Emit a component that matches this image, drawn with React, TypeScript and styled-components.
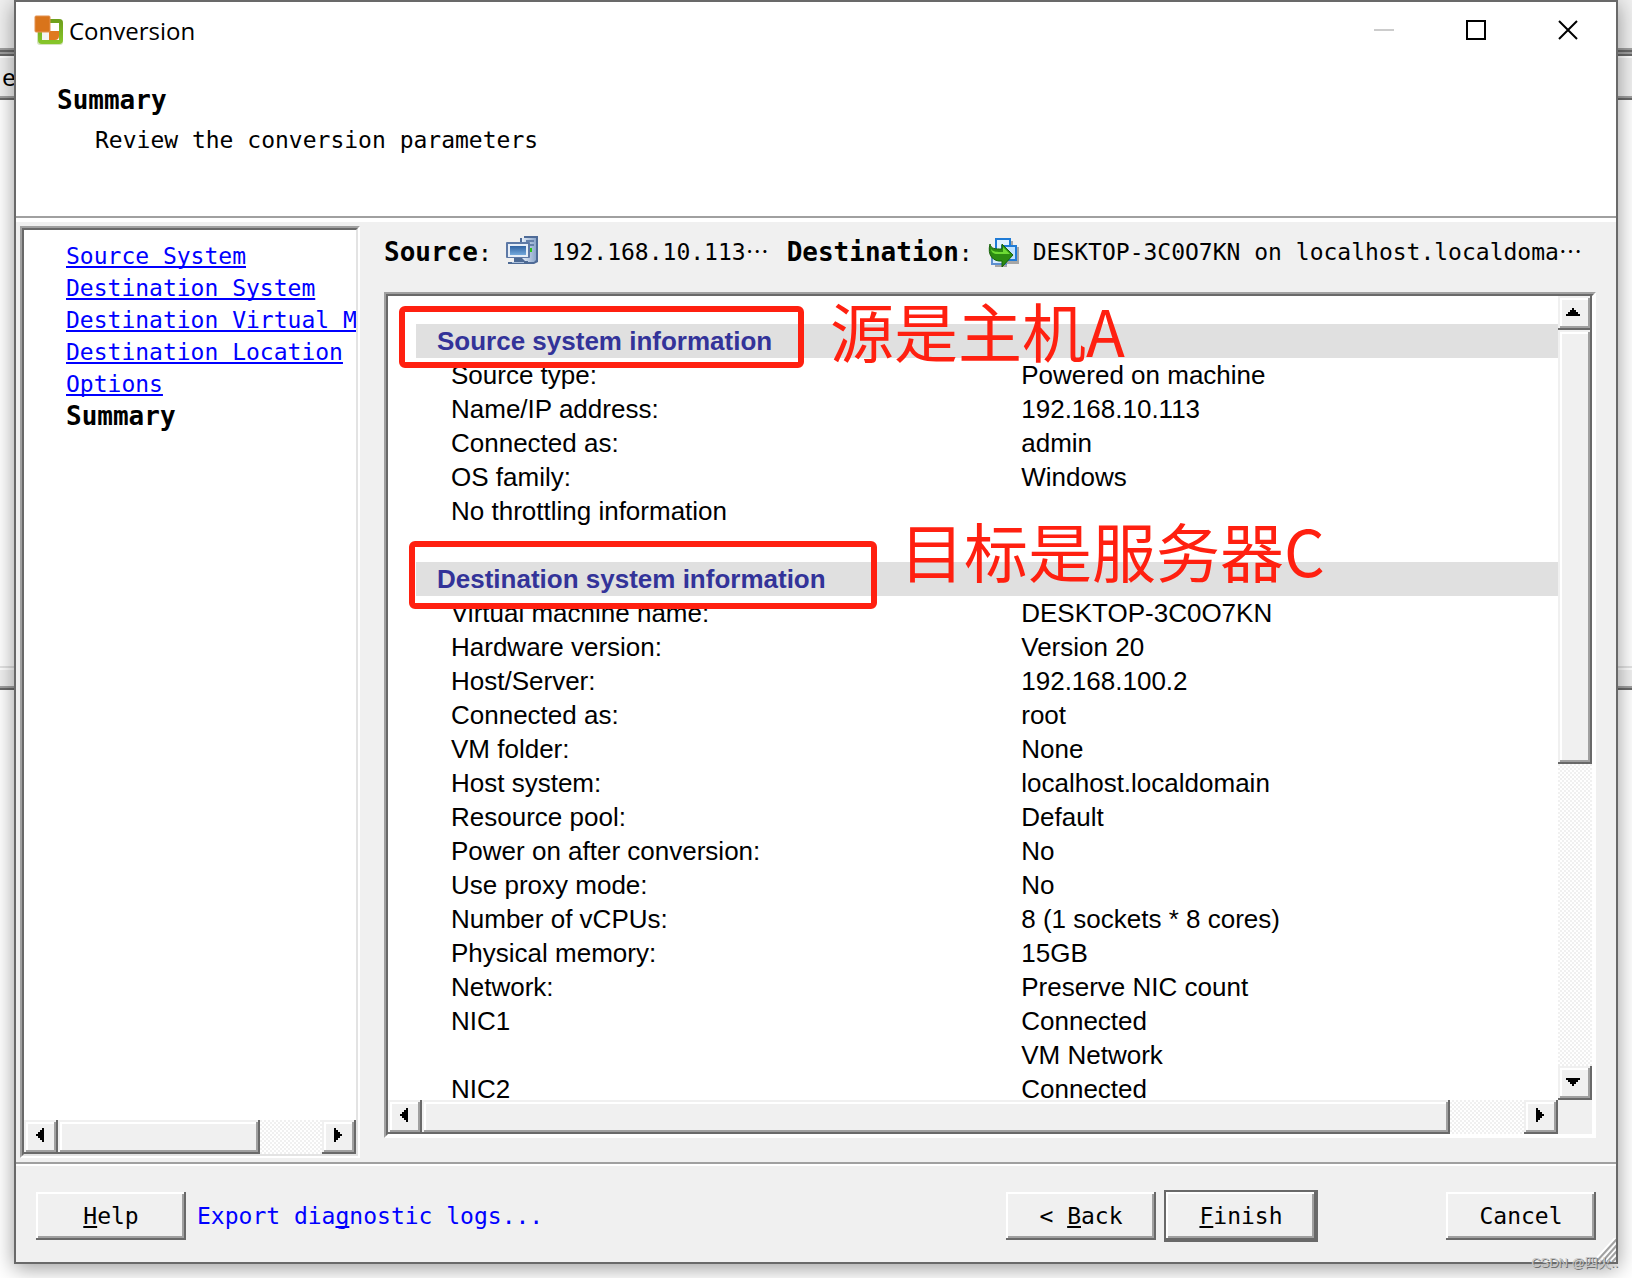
import React from "react";
import styled, { createGlobalStyle, css } from "styled-components";

const face = "#f0f0f0";
const shade = "#a0a0a0";
const dark = "#696969";
const light = "#e3e3e3";
const red = "#ff2010";
const mono = '"DejaVu Sans Mono", "Liberation Mono", monospace';

const Global = createGlobalStyle`
  * { box-sizing: border-box; }
  body { margin: 0; background: #fff; color: #000; font-family: ${mono}; font-size: 23px; line-height: 32px; }
  button { font: inherit; color: inherit; padding: 0; margin: 0; }
`;

const Desktop = styled.div`
  position: relative;
  height: 100vh;
  padding: 0 14px 14px;
  overflow: hidden;
`;

const Backdrop = styled.div`
  position: absolute;
  inset: 0;
  display: flex;
  flex-direction: column;
  background: #fff;
`;

const BackBar = styled.div`
  height: 56px;
  background: ${face};
  border-bottom: 2px solid ${dark};
  display: flex;
  flex-direction: column;
  justify-content: flex-end;
  &::after {
    content: "";
    height: 6px;
    background: linear-gradient(${shade} 2px, ${dark} 2px 4px, ${shade} 4px);
  }
`;

const BackHeader = styled.div`
  height: 44px;
  padding: 4px 0 0 2px;
  background: ${face};
  border-top: 2px solid #fff;
  border-bottom: 2px solid ${dark};
  box-shadow: inset 0 -2px 0 ${shade};
`;

const BackList = styled.div`
  height: 566px;
  background: #fff;
`;

const BackSplitter = styled.div`
  height: 24px;
  background: ${face};
  border-top: 2px solid ${light};
  border-bottom: 2px solid ${dark};
  box-shadow: inset 0 2px 0 #fff, inset 0 -2px 0 ${shade};
`;

const Dialog = styled.main`
  position: relative;
  height: 100%;
  display: flex;
  flex-direction: column;
  background: ${face};
  border: 2px solid ${dark};
  box-shadow: 0 4px 20px rgba(0, 0, 0, 0.4);
`;

const TitleBar = styled.header`
  display: flex;
  align-items: center;
  height: 56px;
  padding: 0 2px 0 18px;
  background: #fff;
  flex: none;
`;

const Title = styled.h1`
  flex: 1;
  margin: 2px 0 0 4px;
  font: 400 24px/32px "Open Sans", "Noto Sans", sans-serif;
`;

const CaptionButton = styled.button`
  width: 92px;
  height: 56px;
  border: 0;
  background: none;
  color: ${(p) => (p.disabled ? "#ccc" : "#000")};
  display: grid;
  place-items: center;
`;

const Banner = styled.section`
  flex: none;
  display: flex;
  flex-direction: column;
  gap: 8px;
  height: 164px;
  padding: 26px 41px;
  background: #fff;
  border-bottom: 4px solid #fff;
  box-shadow: inset 0 -2px 0 ${shade};
`;

const Strong = styled.strong`
  font-size: 26px;
  font-weight: 700;
  white-space: nowrap;
`;

const BannerTitle = styled.h2`
  margin: 0;
  font-size: 26px;
  line-height: 32px;
`;

const BannerText = styled.p`
  margin: 0;
  padding-left: 38px;
`;

const Body = styled.div`
  flex: 1;
  min-height: 0;
  display: grid;
  grid-template-columns: 340px minmax(0, 1fr);
  gap: 24px;
  padding: 4px 20px 4px 4px;
`;

const sunken = css`
  border: 2px solid;
  border-color: ${shade} #fff #fff ${shade};
`;

const Sidebar = styled.nav`
  ${sunken}
  min-height: 0;
  display: flex;
`;

const SidebarInner = styled.div`
  flex: 1;
  min-width: 0;
  display: flex;
  flex-direction: column;
  background: #fff;
  border: 2px solid;
  border-color: ${dark} ${light} ${light} ${dark};
`;

const StepList = styled.ol`
  flex: 1;
  margin: 0;
  padding: 10px 0 0 42px;
  list-style: none;
  overflow: hidden;
  white-space: nowrap;
`;

const StepLink = styled.a`
  color: #00f;
  text-decoration: underline;
  text-decoration-thickness: 2px;
  text-underline-offset: 2px;
  text-decoration-skip-ink: none;
`;

const Content = styled.section`
  min-height: 0;
  display: flex;
  flex-direction: column;
  padding-bottom: 20px;
`;

const Route = styled.div`
  flex: none;
  display: flex;
  gap: 18px;
  height: 66px;
  padding-top: 10px;
`;

const RouteEnd = styled.div`
  display: flex;
  gap: 14px;
  height: 32px;
  white-space: nowrap;
`;

const Ellipsis = styled.span`
  font-family: "Noto Sans CJK SC", sans-serif;
  line-height: 1;
`;

const Pane = styled.div`
  ${sunken}
  flex: 1;
  min-height: 0;
  display: flex;
`;

const PaneGrid = styled.div`
  flex: 1;
  min-width: 0;
  display: grid;
  grid-template: minmax(0, 1fr) 34px / minmax(0, 1fr) 34px;
  border: 2px solid;
  border-color: ${dark} #fff #fff ${dark};
`;

const Viewport = styled.div`
  position: relative;
  overflow: hidden;
  padding: 28px 0 0 28px;
  background: #fff;
`;

const InfoTable = styled.table`
  width: 100%;
  table-layout: fixed;
  border-collapse: collapse;
  font: 26px/34px "Liberation Sans", Arial, sans-serif;
`;

const LabelCol = styled.col`
  width: 53%;
`;

const GroupHead = styled.th`
  height: 34px;
  padding: 0 0 0 21px;
  text-align: left;
  color: #333399;
  background: #e0e0e0;
`;

const RowHead = styled.th`
  height: 34px;
  padding: 0 0 0 35px;
  text-align: left;
  font-weight: 400;
`;

const Cell = styled.td`
  height: 34px;
  padding: 0;
`;

const MarkBox = styled.div<{ $x: number; $y: number; $w: number; $h: number }>`
  position: absolute;
  left: ${(p) => p.$x}px;
  top: ${(p) => p.$y}px;
  width: ${(p) => p.$w}px;
  height: ${(p) => p.$h}px;
  border: 6px solid ${red};
  border-radius: 6px;
`;

const MarkText = styled.div<{ $x: number; $y: number }>`
  position: absolute;
  left: ${(p) => p.$x}px;
  top: ${(p) => p.$y}px;
  color: ${red};
  font: 64px/64px "Noto Sans CJK SC", sans-serif;
  white-space: nowrap;
`;

const Bar = styled.div<{ $vertical?: boolean }>`
  display: flex;
  flex-direction: ${(p) => (p.$vertical ? "column" : "row")};
  flex: none;
  min-height: 34px;
  min-width: 34px;
  background: repeating-conic-gradient(#fff 0 25%, ${face} 0 50%) 0 0 / 4px 4px;
`;

const raised = css`
  background: ${face};
  box-shadow: inset -2px -2px 0 ${dark}, inset 2px 2px 0 ${face}, inset -4px -4px 0 ${shade}, inset 4px 4px 0 #fff;
`;

const ArrowButton = styled.button`
  ${raised}
  width: 34px;
  height: 34px;
  border: 0;
  flex: none;
  display: block;
`;

const Track = styled.div<{ $vertical?: boolean }>`
  flex: 1;
  min-width: 0;
  min-height: 0;
  display: flex;
  flex-direction: ${(p) => (p.$vertical ? "column" : "row")};
`;

const Thumb = styled.div<{ $size: string }>`
  ${raised}
  flex: 0 0 ${(p) => p.$size};
`;

const Footer = styled.footer`
  flex: none;
  display: flex;
  align-items: center;
  padding: 26px 20px 20px;
  border-top: 2px solid ${shade};
  box-shadow: inset 0 2px 0 #fff;
  height: 100px;
`;

const PushButton = styled.button<{ $default?: boolean }>`
  width: ${(p) => (p.$default ? 154 : 150)}px;
  height: ${(p) => (p.$default ? 52 : 48)}px;
  background: ${face};
  border: ${(p) => (p.$default ? 2 : 0)}px solid ${dark};
  box-shadow: inset -2px -2px 0 ${dark}, inset 2px 2px 0 #fff, inset -4px -4px 0 ${shade};
  white-space: pre;
`;

const ExportLink = styled.a`
  flex: 1;
  margin-left: 11px;
  color: #00f;
  text-decoration: none;
`;

const NavButtons = styled.div`
  display: flex;
  align-items: center;
  gap: 8px;
  margin-right: 128px;
`;

const Key = styled.span`
  text-decoration: underline;
  text-decoration-thickness: 2px;
  text-underline-offset: 2px;
  text-decoration-skip-ink: none;
`;

const Grip = styled.svg`
  position: absolute;
  right: 0;
  bottom: 0;
`;

const Watermark = styled.div`
  position: absolute;
  right: 14px;
  bottom: 5px;
  color: #c8c8c8;
  font: 13px/20px "Liberation Sans", "Noto Sans CJK SC", sans-serif;
  text-shadow: 1px 1px 0 #707070;
`;

const AppIcon = () => (
  <svg width="31" height="30" viewBox="0 0 31 30" aria-hidden="true">
    <defs>
      <linearGradient id="leaf" x1="0" y1="0" x2="0" y2="1">
        <stop offset="0" stopColor="#6fa01c" />
        <stop offset="1" stopColor="#86c52a" />
      </linearGradient>
    </defs>
    <rect x="3" y="4" width="26" height="26" rx="3" fill="#d5e3bf" />
    <rect x="6" y="6" width="21" height="21" rx="2" fill="#fff" stroke="url(#leaf)" strokeWidth="4" />
    <path d="M15 16h10v5q0 4-4 4h-6z" fill="#df7a20" />
    <path d="M8 17h7v8H8z" fill="#f3f3f3" />
    <rect x="1" y="1" width="15" height="16" rx="1" fill="#d9741b" stroke="#e39150" strokeWidth="1" />
  </svg>
);

const ComputerIcon = () => (
  <svg width="32" height="32" viewBox="0 0 32 32" aria-hidden="true">
    <defs>
      <linearGradient id="screen" x1="0" y1="0" x2="0" y2="1">
        <stop offset="0" stopColor="#2f62a2" />
        <stop offset="1" stopColor="#74a9dc" />
      </linearGradient>
      <linearGradient id="tower" x1="0" y1="0" x2="1" y2="0">
        <stop offset="0" stopColor="#e4edf8" />
        <stop offset="1" stopColor="#8ba6cb" />
      </linearGradient>
    </defs>
    <path d="M18 0h14v26l-4 2h-8l-6-4V2h4z" fill="#4f6b97" />
    <path d="M16 2h14v22l-2 2h-8l-4-4z" fill="url(#tower)" />
    <path d="M20 4h8v2h-8zM20 8h8v2h-8z" fill="#6480aa" />
    <path d="M24 12h2v4h-2z" fill="#2fc41c" />
    <rect x="0" y="6" width="24" height="16" rx="1" fill="#5d79a6" />
    <rect x="2" y="8" width="20" height="13" fill="#e6eef8" />
    <rect x="4" y="10" width="16" height="9" fill="url(#screen)" />
    <path d="M8 22h8v3h6v3H2v-2h6z" fill="#4d6a94" />
    <path d="M6 26h12v1H6z" fill="#a9bfdc" />
  </svg>
);

const ConvertIcon = () => (
  <svg width="32" height="32" viewBox="0 0 32 32" aria-hidden="true">
    <path d="M10 5h16v6h6v17H20v3H8v-4z" fill="#a6a6a6" />
    <rect x="9" y="3" width="14" height="14" fill="#dff1ff" stroke="#1f7bd6" strokeWidth="2" />
    <rect x="15" y="10" width="14" height="14" fill="#bfe2ff" stroke="#1f7bd6" strokeWidth="2" />
    <rect x="5" y="16" width="14" height="12" fill="#d8ecff" stroke="#5d8fd0" strokeWidth="2" />
    <path d="M3 8c1 5 5 5 12 5V8l11 11-11 12v-6C6 26 0 19 3 8z" fill="#2c8c12" stroke="#17620a" />
    <path d="M4 13c2 3 6 3 12 3v-5l7 7H10c-3 0-6-2-6-5z" fill="#6ddb34" />
  </svg>
);

const arrowPaths = {
  up: "M14 12h2v2h2v2h2v2h2v2H8v-2h2v-2h2v-2h2z",
  down: "M8 12h14v2h-2v2h-2v2h-2v2h-2v-2h-2v-2h-2v-2H8z",
  left: "M20 8v14h-2v-2h-2v-2h-2v-2h-2v-2h2v-2h2v-2h2V8z",
  right: "M12 8v14h2v-2h2v-2h2v-2h2v-2h-2v-2h-2v-2h-2V8z",
};

const Arrow = ({ dir }: { dir: keyof typeof arrowPaths }) => (
  <ArrowButton type="button" aria-label={`Scroll ${dir}`}>
    <svg width="34" height="34" viewBox="0 0 34 34" shapeRendering="crispEdges" aria-hidden="true">
      <path d={arrowPaths[dir]} />
    </svg>
  </ArrowButton>
);

const ScrollBar = ({ vertical, size }: { vertical?: boolean; size: string }) => (
  <Bar $vertical={vertical}>
    <Arrow dir={vertical ? "up" : "left"} />
    <Track $vertical={vertical}>
      <Thumb $size={size} />
    </Track>
    <Arrow dir={vertical ? "down" : "right"} />
  </Bar>
);

const steps = ["Source System", "Destination System", "Destination Virtual Machine", "Destination Location", "Options"];

const groups = [
  {
    title: "Source system information",
    rows: [
      ["Source type:", "Powered on machine"],
      ["Name/IP address:", "192.168.10.113"],
      ["Connected as:", "admin"],
      ["OS family:", "Windows"],
      ["No throttling information", ""],
      ["", ""],
    ],
  },
  {
    title: "Destination system information",
    rows: [
      ["Virtual machine name:", "DESKTOP-3C0O7KN"],
      ["Hardware version:", "Version 20"],
      ["Host/Server:", "192.168.100.2"],
      ["Connected as:", "root"],
      ["VM folder:", "None"],
      ["Host system:", "localhost.localdomain"],
      ["Resource pool:", "Default"],
      ["Power on after conversion:", "No"],
      ["Use proxy mode:", "No"],
      ["Number of vCPUs:", "8 (1 sockets * 8 cores)"],
      ["Physical memory:", "15GB"],
      ["Network:", "Preserve NIC count"],
      ["NIC1", "Connected"],
      ["", "VM Network"],
      ["NIC2", "Connected"],
    ],
  },
];

export default function App() {
  return (
    <Desktop>
      <Global />
      <Backdrop>
        <BackBar />
        <BackHeader>e</BackHeader>
        <BackList />
        <BackSplitter />
      </Backdrop>
      <Dialog>
        <TitleBar>
          <AppIcon />
          <Title>Conversion</Title>
          <CaptionButton type="button" disabled aria-label="Minimize">
            <svg width="20" height="20" viewBox="0 0 20 20">
              <path d="M0 10h20" stroke="currentColor" strokeWidth="2" />
            </svg>
          </CaptionButton>
          <CaptionButton type="button" aria-label="Maximize">
            <svg width="20" height="20" viewBox="0 0 20 20">
              <rect x="1" y="1" width="18" height="18" fill="none" stroke="currentColor" strokeWidth="2" />
            </svg>
          </CaptionButton>
          <CaptionButton type="button" aria-label="Close">
            <svg width="20" height="20" viewBox="0 0 20 20">
              <path d="M1 1l18 18M19 1L1 19" stroke="currentColor" strokeWidth="2" />
            </svg>
          </CaptionButton>
        </TitleBar>
        <Banner>
          <BannerTitle>Summary</BannerTitle>
          <BannerText>Review the conversion parameters</BannerText>
        </Banner>
        <Body>
          <Sidebar>
            <SidebarInner>
              <StepList>
                {steps.map((s) => (
                  <li key={s}>
                    <StepLink href="#">{s}</StepLink>
                  </li>
                ))}
                <li>
                  <Strong>Summary</Strong>
                </li>
              </StepList>
              <ScrollBar size="calc(100% - 62px)" />
            </SidebarInner>
          </Sidebar>
          <Content>
            <Route>
              <RouteEnd>
                <span>
                  <Strong>Source</Strong>:
                </span>
                <ComputerIcon />
                <span>
                  192.168.10.113<Ellipsis lang="zh-CN">…</Ellipsis>
                </span>
              </RouteEnd>
              <RouteEnd>
                <span>
                  <Strong>Destination</Strong>:
                </span>
                <ConvertIcon />
                <span>
                  DESKTOP-3C0O7KN on localhost.localdoma<Ellipsis lang="zh-CN">⋯</Ellipsis>
                </span>
              </RouteEnd>
            </Route>
            <Pane>
              <PaneGrid>
                <Viewport>
                  <InfoTable>
                    <colgroup>
                      <LabelCol />
                      <col />
                    </colgroup>
                    {groups.map((g) => (
                      <tbody key={g.title}>
                        <tr>
                          <GroupHead colSpan={2} scope="rowgroup">
                            {g.title}
                          </GroupHead>
                        </tr>
                        {g.rows.map(([label, value], i) => (
                          <tr key={i}>
                            <RowHead scope="row">{label}</RowHead>
                            <Cell>{value}</Cell>
                          </tr>
                        ))}
                      </tbody>
                    ))}
                  </InfoTable>
                  <MarkBox $x={11} $y={10} $w={405} $h={62} />
                  <MarkText $x={442} $y={1} lang="zh-CN">
                    源是主机A
                  </MarkText>
                  <MarkBox $x={21} $y={245} $w={468} $h={68} />
                  <MarkText $x={512} $y={221} lang="zh-CN">
                    目标是服务器C
                  </MarkText>
                </Viewport>
                <ScrollBar vertical size="59%" />
                <ScrollBar size="calc(100% - 74px)" />
              </PaneGrid>
            </Pane>
          </Content>
        </Body>
        <Footer>
          <PushButton type="button">
            <Key>H</Key>elp
          </PushButton>
          <ExportLink href="#">
            Export dia<Key>g</Key>nostic logs...
          </ExportLink>
          <NavButtons>
            <PushButton type="button">
              {"< "}
              <Key>B</Key>ack
            </PushButton>
            <PushButton type="button" $default>
              <Key>F</Key>inish
            </PushButton>
          </NavButtons>
          <PushButton type="button">Cancel</PushButton>
        </Footer>
        <Grip width="20" height="24" viewBox="0 0 20 24" aria-hidden="true">
          <path d="M-1 22L20 -1M4 24L21 5M9 24L21 11M14 24L21 17" stroke="#fff" strokeWidth="2" />
          <path d="M0 24L21 1M6 24L21 7M11 24L21 13M16 24L21 19" stroke="#a0a0a0" strokeWidth="2" />
        </Grip>
      </Dialog>
      <Watermark>CSDN @四火..</Watermark>
    </Desktop>
  );
}
